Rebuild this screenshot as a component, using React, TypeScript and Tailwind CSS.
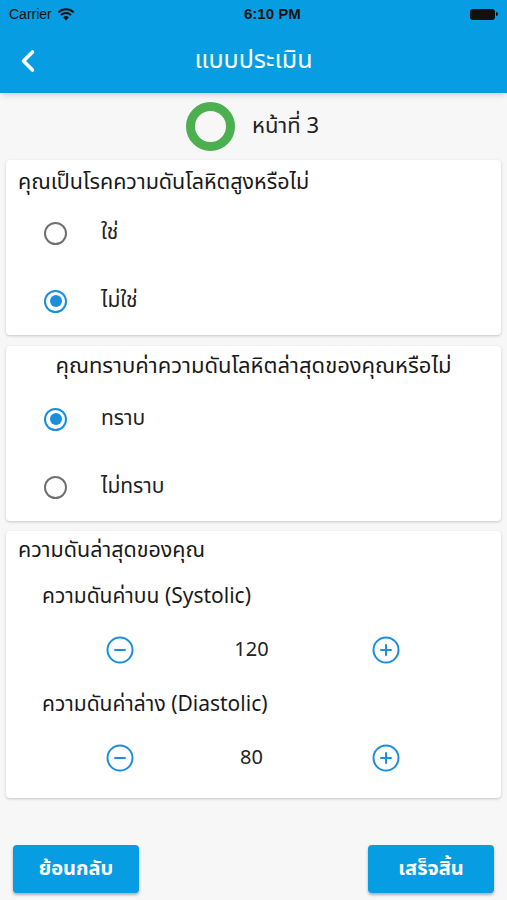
import { ChevronLeft, CircleMinus, CirclePlus } from 'lucide-react';

const thai = { fontFamily: '"Noto Sans Thai", "Noto Sans", "Liberation Sans", sans-serif' };

function Radio({ checked, label }: { checked: boolean; label: string }) {
  return (
    <div className="flex items-center h-[68px] pl-[38px]">
      <div
        className={
          'w-[23px] h-[23px] rounded-full border-2 flex items-center justify-center ' +
          (checked ? 'border-[#1a8fdb]' : 'border-[#707070]')
        }
      >
        {checked && <div className="w-[12px] h-[12px] rounded-full bg-[#1a8fdb]" />}
      </div>
      <span className="ml-[34px] text-[21px] text-[#222]">{label}</span>
    </div>
  );
}

function Stepper({ value }: { value: number }) {
  return (
    <div className="flex items-center h-[74px] pl-[2px]">
      <div className="w-[226px] flex justify-center">
        <CircleMinus size={30} strokeWidth={1.6} className="text-[#1a8fdb]" />
      </div>
      <div className="w-[40px] flex justify-center text-[20px] text-[#222]">{value}</div>
      <div className="w-[232px] flex justify-center">
        <CirclePlus size={30} strokeWidth={1.6} className="text-[#1a8fdb]" />
      </div>
    </div>
  );
}

export default function App() {
  return (
    <div className="w-[507px] h-[900px] bg-[#f7f7f7] flex flex-col overflow-hidden" style={thai}>
      <div className="bg-[#069de3] shadow-md relative z-10">
        <div className="h-[28px] flex items-center justify-between px-[9px] text-white">
          <div className="flex items-center gap-[5px] text-[14px]" style={{ fontFamily: '"Liberation Sans", sans-serif' }}>
            <span className="text-[#111]">Carrier</span>
            <svg width="18" height="13" viewBox="0 0 18 13">
              <path d="M9 12.5 L6.2 9.4 A4 4 0 0 1 11.8 9.4 Z" fill="#111" />
              <path d="M3.9 7.1 A7.3 7.3 0 0 1 14.1 7.1" stroke="#111" strokeWidth="2" fill="none" />
              <path d="M1.3 4.4 A11 11 0 0 1 16.7 4.4" stroke="#111" strokeWidth="2" fill="none" />
            </svg>
          </div>
          <span className="text-[15px] font-bold text-[#111]" style={{ fontFamily: '"Liberation Sans", sans-serif' }}>
            6:10 PM
          </span>
          <div className="flex items-center">
            <div className="w-[25px] h-[11px] rounded-[3px] bg-[#111]" />
            <div className="w-[2px] h-[4px] bg-[#111] rounded-r-sm ml-[1px]" />
          </div>
        </div>
        <div className="h-[65px] flex items-center relative">
          <ChevronLeft size={36} strokeWidth={2.4} className="text-white absolute left-[10px]" />
          <div className="w-full text-center text-white text-[25px]">แบบประเมิน</div>
        </div>
      </div>

      <div className="flex items-center justify-center gap-[17px] h-[67px] pr-[2px]">
        <div className="w-[49px] h-[49px] rounded-full border-[9px] border-[#4caf50]" />
        <span className="text-[22px] text-[#222]">หน้าที่ 3</span>
      </div>

      <div className="mx-[6px] bg-white rounded-[4px] shadow-[0_1px_3px_rgba(0,0,0,0.2)]">
        <div className="pl-[12px] pt-[7px] leading-[32px] text-[21.5px] text-[#1a1a1a]">คุณเป็นโรคความดันโลหิตสูงหรือไม่</div>
        <Radio checked={false} label="ใช่" />
        <Radio checked label="ไม่ใช่" />
      </div>

      <div className="mx-[6px] mt-[11px] bg-white rounded-[4px] shadow-[0_1px_3px_rgba(0,0,0,0.2)]">
        <div className="pt-[5px] mb-[2px] leading-[32px] text-center text-[22px] text-[#1a1a1a]">คุณทราบค่าความดันโลหิตล่าสุดของคุณหรือไม่</div>
        <Radio checked label="ทราบ" />
        <Radio checked={false} label="ไม่ทราบ" />
      </div>

      <div className="mx-[6px] mt-[10px] bg-white rounded-[4px] shadow-[0_1px_3px_rgba(0,0,0,0.2)] pb-[3px]">
        <div className="pl-[12px] pt-[4px] leading-[32px] text-[21.5px] text-[#1a1a1a]">ความดันล่าสุดของคุณ</div>
        <div className="pl-[36px] pt-[14px] leading-[32px] text-[21px] text-[#1a1a1a]">ความดันค่าบน (Systolic)</div>
        <Stepper value={120} />
        <div className="pl-[36px] pt-[2px] leading-[32px] text-[21px] text-[#1a1a1a]">ความดันค่าล่าง (Diastolic)</div>
        <Stepper value={80} />
      </div>

      <div className="mt-auto mb-[7px] flex justify-between px-[13px]">
        <button className="w-[126px] h-[48px] rounded-[4px] bg-[#069de3] text-white text-[20px] font-bold shadow-[0_2px_3px_rgba(0,0,0,0.3)]">
          ย้อนกลับ
        </button>
        <button className="w-[126px] h-[48px] rounded-[4px] bg-[#069de3] text-white text-[20px] font-bold shadow-[0_2px_3px_rgba(0,0,0,0.3)]">
          เสร็จสิ้น
        </button>
      </div>
    </div>
  );
}
